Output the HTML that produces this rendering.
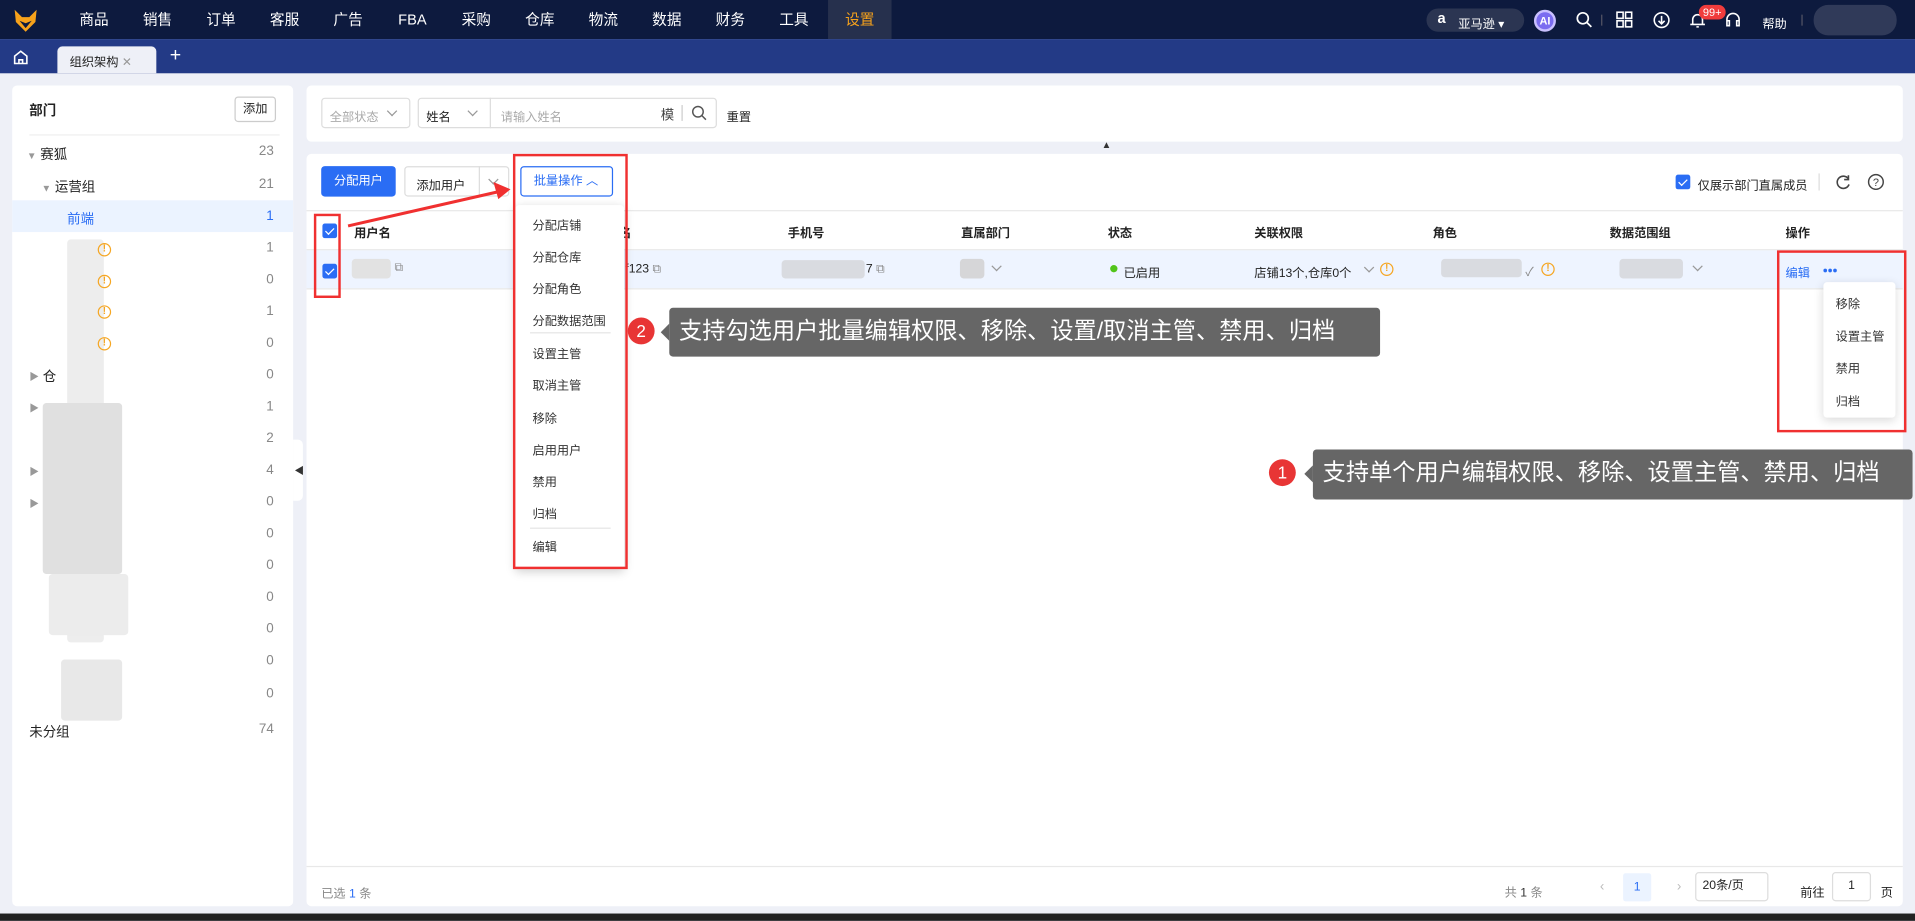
<!DOCTYPE html>
<html><head><meta charset="utf-8">
<style>
*{box-sizing:border-box;margin:0;padding:0}
html,body{width:1915px;height:920px;overflow:hidden;background:#eef0f7;font-family:"Liberation Sans","Noto Sans CJK SC",sans-serif}
#w{position:absolute;left:0;top:0;width:1568px;height:754px;transform:scale(1.2213);transform-origin:0 0;background:#eef0f7;font-size:10px;color:#222}
.a{position:absolute}
.nav{left:0;top:0;width:1568px;height:32px;background:#0d1a3e}
.nav .m{position:absolute;top:0;height:32px;line-height:32px;color:#fff;font-size:12px}
.tabs{left:0;top:32px;width:1568px;height:28px;background:#233a86}
.panel{background:#fff;border-radius:4px}
.t{position:absolute;white-space:nowrap}
.cnt{position:absolute;right:16px;color:#888;font-size:10px}
.cb{position:absolute;width:12px;height:12px;background:#2a6df4;border-radius:2px}
.cb:after{content:"";position:absolute;left:4px;top:1.5px;width:3px;height:6px;border:solid #fff;border-width:0 1.5px 1.5px 0;transform:rotate(45deg)}
.th{position:absolute;top:182px;font-weight:bold;font-size:10px}
.mi{position:absolute;left:436px;font-size:10px;color:#333}
.red{position:absolute;border:2px solid #f03030}
.tip{position:absolute;background:#666;color:#fff;font-size:19px;border-radius:3px;line-height:40px;padding-left:8px}
.tip:before{content:"";position:absolute;left:-7px;top:13px;border:7px solid transparent;border-left:0;border-right-color:#666}
.num{position:absolute;width:22px;height:22px;border-radius:50%;background:#e83535;color:#fff;font-size:14px;text-align:center;line-height:22px}
.blur{position:absolute;background:#d6d6d8;border-radius:3px}
.warn{position:absolute;width:11px;height:11px;border:1.5px solid #f5a623;border-radius:50%;color:#f5a623;font-size:8px;line-height:8px;text-align:center;font-weight:bold}
.ch{position:absolute;width:6px;height:6px;border:solid #999;border-width:0 1px 1px 0;transform:rotate(45deg)}
.n{position:absolute;left:218px;color:#888;font-size:11px}
</style></head><body><div id="w">
<div class="a nav">
 <svg class="a" style="left:10px;top:6px" width="22" height="22" viewBox="0 0 22 22"><path d="M2 2 L8 8 L14 8 L20 2 L19 12 L11 20 L3 12Z" fill="#f7a21b"/><path d="M6 11 L11 17 L16 11 L11 13Z" fill="#0d1a3e"/></svg>
 <div class="m" style="left:65px">商品</div><div class="m" style="left:117px">销售</div><div class="m" style="left:169px">订单</div><div class="m" style="left:221px">客服</div><div class="m" style="left:273px">广告</div><div class="m" style="left:326px">FBA</div><div class="m" style="left:378px">采购</div><div class="m" style="left:430px">仓库</div><div class="m" style="left:482px">物流</div><div class="m" style="left:534px">数据</div><div class="m" style="left:586px">财务</div><div class="m" style="left:638px">工具</div>
 <div class="a" style="left:678px;top:0;width:52px;height:32px;background:#26304d"></div><div class="m" style="left:692px;color:#f7a21b">设置</div>
 <div class="a" style="left:1168px;top:7px;width:80px;height:19px;border-radius:10px;background:#2b3552"></div>
 <div class="t" style="left:1177px;top:8px;color:#fff;font-size:12px;font-weight:bold">a</div>
 <div class="t" style="left:1194px;top:11px;color:#fff;font-size:10px">亚马逊 ▾</div>
 <div class="a" style="left:1256px;top:8px;width:18px;height:18px;border-radius:50%;background:#7b6cf0;border:2px solid #c9c0ff;color:#fff;font-size:9px;font-weight:bold;text-align:center;line-height:14px">AI</div>
 <svg class="a" style="left:1290px;top:9px" width="14" height="14"><circle cx="6" cy="6" r="4.5" fill="none" stroke="#fff" stroke-width="1.4"/><path d="M9.5 9.5L13 13" stroke="#fff" stroke-width="1.4"/></svg>
 <div class="a" style="left:1311px;top:12px;width:1px;height:9px;background:#556"></div>
 <svg class="a" style="left:1323px;top:9px" width="14" height="14"><rect x="1" y="1" width="5" height="5" fill="none" stroke="#fff" stroke-width="1.3"/><rect x="8" y="1" width="5" height="5" fill="none" stroke="#fff" stroke-width="1.3"/><rect x="1" y="8" width="5" height="5" fill="none" stroke="#fff" stroke-width="1.3"/><rect x="8" y="8" width="5" height="5" fill="none" stroke="#fff" stroke-width="1.3"/></svg>
 <svg class="a" style="left:1353px;top:9px" width="15" height="15"><circle cx="7.5" cy="7.5" r="6" fill="none" stroke="#fff" stroke-width="1.3"/><path d="M7.5 4v6M5 8l2.5 2.5L10 8" stroke="#fff" stroke-width="1.3" fill="none"/></svg>
 <svg class="a" style="left:1383px;top:9px" width="14" height="15"><path d="M3 11V7a4 4 0 0 1 8 0v4H3zM1 11h12M6 13h2" stroke="#fff" stroke-width="1.3" fill="none"/></svg>
 <div class="a" style="left:1391px;top:4px;width:22px;height:12px;border-radius:6px;background:#f03c3c;color:#fff;font-size:9px;text-align:center;line-height:12px">99+</div>
 <svg class="a" style="left:1411px;top:9px" width="16" height="16"><path d="M3 10V7a5 5 0 0 1 10 0v3M3 8h2v4H3zM11 8h2v4h-2z" stroke="#fff" stroke-width="1.3" fill="none"/></svg>
 <div class="t" style="left:1443px;top:11px;color:#fff;font-size:10px">帮助</div>
 <div class="a" style="left:1475px;top:12px;width:1px;height:9px;background:#556"></div>
 <div class="a" style="left:1485px;top:4px;width:68px;height:25px;border-radius:12px;background:#3a4260;opacity:.8"></div>
</div>
<div class="a tabs">
 <svg class="a" style="left:10px;top:8px" width="14" height="14"><path d="M2 6L7 2L12 6V12H2Z M5.5 12V9h3v3" stroke="#fff" stroke-width="1.3" fill="none"/></svg>
 <div class="a" style="left:47px;top:6px;width:81px;height:22px;background:#eef0f7;border-radius:4px 4px 0 0"></div>
 <div class="t" style="left:57px;top:10px;font-size:10px;color:#222">组织架构 <span style="color:#999">✕</span></div>
 <div class="t" style="left:139px;top:5px;color:#fff;font-size:16px">+</div>
</div>

<!-- left panel -->
<div class="a panel" style="left:10px;top:70px;width:230px;height:672px"></div>
<div class="t" style="left:24px;top:82px;font-weight:bold;font-size:11px">部门</div>
<div class="a" style="left:192px;top:79px;width:34px;height:21px;border:1px solid #ccc;border-radius:3px;text-align:center;line-height:19px;font-size:10px">添加</div>
<div class="a" style="left:24px;top:110px;width:205px;height:1px;background:#eee"></div>
<div class="a" style="left:10px;top:164px;width:230px;height:26px;background:#ebf3ff"></div>
<div class="t" style="left:22px;top:118px;font-size:11px"><span style="color:#999;font-size:8px">▼</span> 赛狐</div><div class="n" style="left:212px;top:118px">23</div>
<div class="t" style="left:34px;top:145px;font-size:11px"><span style="color:#999;font-size:8px">▼</span> 运营组</div><div class="n" style="left:212px;top:145px">21</div>
<div class="t" style="left:55px;top:171px;font-size:11px;color:#2a6df4">前端</div><div class="t" style="left:218px;top:171px;font-size:11px;color:#2a6df4">1</div>
<div class="blur" style="left:55px;top:196px;width:30px;height:330px;background:#e8e8e8;opacity:.8"></div>
<div class="blur" style="left:35px;top:330px;width:65px;height:140px;background:#e0e0e0"></div>
<div class="blur" style="left:40px;top:470px;width:65px;height:50px;background:#ececec"></div>
<div class="blur" style="left:50px;top:540px;width:50px;height:50px;background:#e8e8e8"></div>
<div class="warn" style="left:80px;top:199px">!</div><div class="warn" style="left:80px;top:225px">!</div><div class="warn" style="left:80px;top:250px">!</div><div class="warn" style="left:80px;top:276px">!</div>
<div class="n" style="top:197px">1</div><div class="n" style="top:223px">0</div><div class="n" style="top:249px">1</div><div class="n" style="top:275px">0</div><div class="n" style="top:301px">0</div><div class="n" style="top:327px">1</div><div class="n" style="top:353px">2</div><div class="n" style="top:379px">4</div><div class="n" style="top:405px">0</div><div class="n" style="top:431px">0</div><div class="n" style="top:457px">0</div><div class="n" style="top:483px">0</div><div class="n" style="top:509px">0</div><div class="n" style="top:535px">0</div><div class="n" style="top:562px">0</div>
<div class="t" style="left:24px;top:303px;color:#999;font-size:8px">▶</div><div class="t" style="left:35px;top:300px;font-size:11px">仓</div>
<div class="t" style="left:24px;top:329px;color:#999;font-size:8px">▶</div>
<div class="t" style="left:24px;top:381px;color:#999;font-size:8px">▶</div>
<div class="t" style="left:24px;top:407px;color:#999;font-size:8px">▶</div>
<div class="t" style="left:24px;top:591px;font-size:11px">未分组</div><div class="n" style="left:212px;top:591px">74</div>
<div class="a" style="left:240px;top:360px;width:8px;height:50px;background:#fff;border-radius:0 4px 4px 0"></div>
<div class="t" style="left:241px;top:380px;font-size:8px;color:#333">◀</div>

<!-- filter panel -->
<div class="a panel" style="left:251px;top:70px;width:1307px;height:46px"></div>
<div class="a" style="left:263px;top:80px;width:73px;height:25px;border:1px solid #ddd;border-radius:3px"></div>
<div class="t" style="left:270px;top:87px;color:#aaa;font-size:10px">全部状态</div><div class="ch" style="left:318px;top:88px"></div>
<div class="a" style="left:342px;top:80px;width:245px;height:25px;border:1px solid #ddd;border-radius:3px"></div>
<div class="a" style="left:401px;top:80px;width:1px;height:25px;background:#ddd"></div>
<div class="t" style="left:349px;top:87px;font-size:10px">姓名</div><div class="ch" style="left:384px;top:88px"></div>
<div class="t" style="left:410px;top:87px;color:#aaa;font-size:10px">请输入姓名</div>
<div class="t" style="left:541px;top:86px;font-size:11px;color:#444">模</div>
<div class="a" style="left:558px;top:86px;width:1px;height:13px;background:#ccc"></div>
<svg class="a" style="left:566px;top:86px" width="13" height="13"><circle cx="5.5" cy="5.5" r="4.3" fill="none" stroke="#555" stroke-width="1.2"/><path d="M8.7 8.7L12 12" stroke="#555" stroke-width="1.2"/></svg>
<div class="t" style="left:595px;top:87px;font-size:10px">重置</div>
<div class="t" style="left:902px;top:114px;font-size:8px;color:#333">▲</div>

<!-- main panel -->
<div class="a panel" style="left:251px;top:126px;width:1307px;height:616px"></div>
<div class="a" style="left:263px;top:136px;width:61px;height:25px;background:#2a6df4;border-radius:3px;color:#fff;font-size:10px;text-align:center;line-height:25px">分配用户</div>
<div class="a" style="left:331px;top:136px;width:86px;height:25px;border:1px solid #ddd;border-radius:3px"></div>
<div class="a" style="left:392px;top:136px;width:1px;height:25px;background:#ddd"></div>
<div class="t" style="left:341px;top:143px;font-size:10px">添加用户</div><div class="ch" style="left:401px;top:144px"></div>
<div class="a" style="left:426px;top:136px;width:76px;height:25px;border:1px solid #2a6df4;border-radius:3px;color:#2a6df4;font-size:10px;line-height:23px;padding-left:10px">批量操作 ︿</div>
<div class="cb" style="left:1372px;top:143px"></div>
<div class="t" style="left:1390px;top:143px;font-size:10px">仅展示部门直属成员</div>
<div class="a" style="left:1489px;top:142px;width:1px;height:14px;background:#ddd"></div>
<svg class="a" style="left:1502px;top:142px" width="14" height="14"><path d="M11.5 4.5A5 5 0 1 0 12 9" fill="none" stroke="#444" stroke-width="1.3"/><path d="M11.5 1.5v3.5h-3.5" fill="none" stroke="#444" stroke-width="1.3"/></svg>
<svg class="a" style="left:1529px;top:142px" width="14" height="14"><circle cx="7" cy="7" r="6" fill="none" stroke="#444" stroke-width="1.2"/><text x="7" y="10.5" font-size="9" text-anchor="middle" fill="#444" font-family="Liberation Sans">?</text></svg>

<div class="a" style="left:251px;top:172px;width:1307px;height:1px;background:#e8e8e8"></div>
<div class="a" style="left:251px;top:204px;width:1307px;height:1px;background:#e8e8e8"></div>
<div class="a" style="left:251px;top:205px;width:1307px;height:31px;background:#eef4ff"></div>
<div class="a" style="left:251px;top:236px;width:1307px;height:1px;background:#e8e8e8"></div>
<div class="cb" style="left:264px;top:183px"></div>
<div class="cb" style="left:264px;top:216px"></div>
<div class="th" style="left:290px">用户名</div><div class="th" style="left:497px">姓名</div><div class="th" style="left:645px">手机号</div><div class="th" style="left:787px">直属部门</div><div class="th" style="left:907px">状态</div><div class="th" style="left:1027px">关联权限</div><div class="th" style="left:1173px">角色</div><div class="th" style="left:1318px">数据范围组</div><div class="th" style="left:1462px">操作</div>
<div class="blur" style="left:288px;top:212px;width:32px;height:16px;background:#e2e2e2"></div>
<div class="t" style="left:323px;top:214px;color:#888">⧉</div>
<div class="t" style="left:512px;top:215px;font-size:10px">f123 <span style="color:#888">⧉</span></div>
<div class="blur" style="left:640px;top:213px;width:68px;height:15px;background:#d9dbe0"></div>
<div class="t" style="left:709px;top:215px;font-size:10px">7 <span style="color:#888">⧉</span></div>
<div class="blur" style="left:786px;top:212px;width:20px;height:16px"></div><div class="ch" style="left:813px;top:215px"></div>
<div class="a" style="left:909px;top:217px;width:6px;height:6px;border-radius:50%;background:#52c41a"></div>
<div class="t" style="left:920px;top:215px;font-size:10px">已启用</div>
<div class="t" style="left:1027px;top:215px;font-size:10px">店铺13个,仓库0个</div><div class="ch" style="left:1118px;top:216px"></div>
<div class="warn" style="left:1130px;top:215px">!</div>
<div class="blur" style="left:1180px;top:212px;width:66px;height:15px;background:#d9dbe0"></div>
<div class="t" style="left:1249px;top:214px;color:#888">✓</div>
<div class="warn" style="left:1262px;top:215px">!</div>
<div class="blur" style="left:1326px;top:212px;width:52px;height:16px;background:#d9dbe0"></div><div class="ch" style="left:1387px;top:215px"></div>
<div class="t" style="left:1462px;top:215px;font-size:10px;color:#2a6df4">编辑</div>
<div class="a" style="left:1493px;top:220px;width:3px;height:3px;border-radius:50%;background:#2a6df4"></div>
<div class="a" style="left:1497px;top:220px;width:3px;height:3px;border-radius:50%;background:#2a6df4"></div>
<div class="a" style="left:1501px;top:220px;width:3px;height:3px;border-radius:50%;background:#2a6df4"></div>

<!-- batch dropdown -->
<div class="a" style="left:422px;top:168px;width:89px;height:298px;background:#fff;border-radius:3px;box-shadow:0 2px 8px rgba(0,0,0,.18)"></div>
<div class="mi" style="top:176px">分配店铺</div><div class="mi" style="top:202px">分配仓库</div><div class="mi" style="top:228px">分配角色</div><div class="mi" style="top:254px">分配数据范围</div>
<div class="a" style="left:434px;top:272px;width:66px;height:1px;background:#e5e5e5"></div>
<div class="mi" style="top:281px">设置主管</div><div class="mi" style="top:307px">取消主管</div><div class="mi" style="top:334px">移除</div><div class="mi" style="top:360px">启用用户</div><div class="mi" style="top:386px">禁用</div><div class="mi" style="top:412px">归档</div>
<div class="a" style="left:434px;top:432px;width:66px;height:1px;background:#e5e5e5"></div>
<div class="mi" style="top:439px">编辑</div>

<!-- row dropdown -->
<div class="a" style="left:1493px;top:231px;width:59px;height:111px;background:#fff;border-radius:3px;box-shadow:0 2px 8px rgba(0,0,0,.15)"></div>
<div class="t" style="left:1503px;top:240px;font-size:10px;color:#333">移除</div>
<div class="t" style="left:1503px;top:267px;font-size:10px;color:#333">设置主管</div>
<div class="t" style="left:1503px;top:293px;font-size:10px;color:#333">禁用</div>
<div class="t" style="left:1503px;top:320px;font-size:10px;color:#333">归档</div>

<!-- annotations -->
<div class="red" style="left:420px;top:126px;width:94px;height:340px"></div>
<div class="red" style="left:257px;top:175px;width:22px;height:69px"></div>
<div class="red" style="left:1455px;top:205px;width:106px;height:149px"></div>
<svg class="a" style="left:280px;top:145px" width="145" height="45"><path d="M5 40 L128 12" stroke="#f03030" stroke-width="2.5"/><path d="M138 10 L124 4 L128 18Z" fill="#f03030"/></svg>
<div class="num" style="left:514px;top:260px">2</div>
<div class="tip" style="left:548px;top:252px;width:582px;height:40px">支持勾选用户批量编辑权限、移除、设置/取消主管、禁用、归档</div>
<div class="num" style="left:1039px;top:376px">1</div>
<div class="tip" style="left:1075px;top:368px;width:491px;height:41px">支持单个用户编辑权限、移除、设置主管、禁用、归档</div>

<!-- footer -->
<div class="a" style="left:251px;top:709px;width:1307px;height:1px;background:#e8e8e8"></div>
<div class="t" style="left:263px;top:723px;font-size:10px;color:#888">已选 <span style="color:#2a6df4">1</span> 条</div>
<div class="t" style="left:1232px;top:722px;font-size:10px;color:#888">共 <span style="color:#333">1</span> 条</div>
<div class="t" style="left:1310px;top:720px;color:#bbb;font-size:11px">‹</div>
<div class="a" style="left:1329px;top:715px;width:23px;height:23px;background:#ebf3ff;color:#2a6df4;font-size:10px;text-align:center;line-height:23px;border-radius:2px">1</div>
<div class="t" style="left:1373px;top:720px;color:#bbb;font-size:11px">›</div>
<div class="a" style="left:1388px;top:714px;width:60px;height:24px;border:1px solid #ddd;border-radius:3px;font-size:10px;line-height:22px;padding-left:5px">20条/页</div>
<div class="t" style="left:1474px;top:722px;font-size:10px">前往</div>
<div class="a" style="left:1500px;top:714px;width:32px;height:24px;border:1px solid #ddd;border-radius:3px;font-size:10px;line-height:22px;text-align:center">1</div>
<div class="t" style="left:1540px;top:722px;font-size:10px">页</div>
<div class="a" style="left:0;top:748px;width:1568px;height:6px;background:#222"></div>
</div></body></html>
